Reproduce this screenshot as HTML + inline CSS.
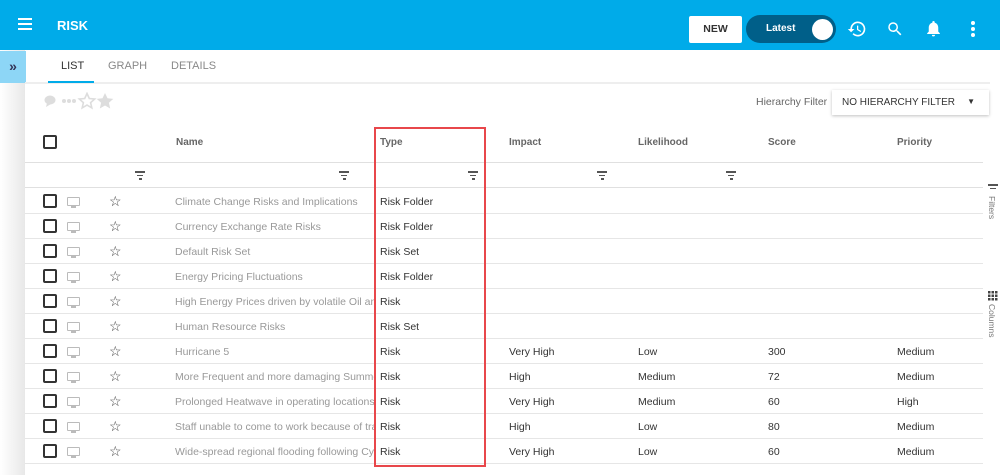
<!DOCTYPE html>
<html><head><style>
*{box-sizing:border-box;margin:0;padding:0}
body{width:1000px;height:475px;overflow:hidden;font-family:"Liberation Sans",sans-serif;background:#fff;position:relative}
.top{position:absolute;left:0;top:0;width:1000px;height:50px;background:#00abe9}
.abs{position:absolute}
.hdr{font-size:10px;font-weight:bold;color:#666}
.row{position:absolute;left:25px;width:958px;height:25px;border-bottom:1px solid #e6e6e6}
.cb{position:absolute;left:18px;top:5px;width:14px;height:14px;border:2px solid #333;border-radius:2px}
.mon{position:absolute;left:42px;top:8px;width:13px;height:9px;border:1.5px solid #bbb;border-radius:1px}
.mon:after{content:"";position:absolute;left:3px;top:8px;width:5px;height:2px;background:#bbb}
.st{position:absolute;left:84px;top:4px;font-size:14px;color:#444}
.c{position:absolute;top:7px;font-size:10.5px;color:#333}
.nm{left:150px;color:#999;width:199px;white-space:nowrap;overflow:hidden}
.flt{position:absolute;top:171px;width:10px}
.flt i{display:block;height:1.5px;background:#555;margin:0 auto 2px}
</style></head><body>
<div class="top"></div>
<div class="abs" style="left:18px;top:18px;width:14px"><div style="height:2px;background:#fff;margin-bottom:3px"></div><div style="height:2px;background:#fff;margin-bottom:3px"></div><div style="height:2px;background:#fff"></div></div>
<div class="abs" style="left:57px;top:18px;color:#fff;font-weight:bold;font-size:13px">RISK</div>
<div class="abs" style="left:689px;top:16px;width:53px;height:27px;background:#fff;border-radius:2px;font-size:10.5px;font-weight:bold;color:#333;text-align:center;line-height:27px">NEW</div>
<div class="abs" style="left:746px;top:15px;width:90px;height:28px;background:#005f89;border-radius:14px"></div>
<div class="abs" style="left:766px;top:23px;color:#fff;font-size:10px;font-weight:bold">Latest</div>
<div class="abs" style="left:812px;top:19px;width:21px;height:21px;background:#fff;border-radius:50%"></div>
<svg class="abs" style="left:847px;top:19px" width="20" height="20" viewBox="0 0 24 24"><path fill="#fff" d="M13 3a9 9 0 0 0-9 9H1l3.9 3.9L9 12H6a7 7 0 1 1 2.05 4.95l-1.420 1.42A9 9 0 1 0 13 3zm-1 5v5l4.28 2.54.72-1.21-3.5-2.08V8z"/></svg>
<svg class="abs" style="left:886px;top:20px" width="18" height="18" viewBox="0 0 24 24"><path fill="#fff" d="M15.5 14h-.79l-.28-.27A6.47 6.47 0 0 0 16 9.5 6.5 6.5 0 1 0 9.5 16c1.61 0 3.09-.59 4.230-1.57l.27.28v.79l5 4.99L20.49 19zm-6 0C7.01 14 5 11.99 5 9.5S7.01 5 9.5 5 14 7.01 14 9.5 11.99 14 9.5 14z"/></svg>
<svg class="abs" style="left:924px;top:19px" width="19" height="19" viewBox="0 0 24 24"><path fill="#fff" d="M12 22c1.1 0 2-.9 2-2h-4a2 2 0 0 0 2 2zm6-6v-5c0-3.07-1.64-5.64-4.5-6.32V4a1.5 1.5 0 0 0-3 0v.68C7.63 5.36 6 7.92 6 11v5l-2 2v1h16v-1z"/></svg>
<svg class="abs" style="left:970px;top:20px" width="6" height="18"><circle cx="3" cy="3" r="2" fill="#fff"/><circle cx="3" cy="9" r="2" fill="#fff"/><circle cx="3" cy="15" r="2" fill="#fff"/></svg>
<div class="abs" style="left:0;top:50px;width:25px;height:425px;background:linear-gradient(90deg,#fff,#e8e8e8)"></div>
<div class="abs" style="left:0;top:51px;width:26px;height:32px;background:#8dd6f6;color:#335;font-size:14px;font-weight:bold;text-align:center;line-height:30px">&#187;</div>
<div class="abs" style="left:25px;top:82px;width:965px;height:2px;background:#eee"></div>
<div class="abs" style="left:61px;top:60px;font-size:11px;color:#333">LIST</div>
<div class="abs" style="left:48px;top:81px;width:46px;height:2px;background:#00abe9"></div>
<div class="abs" style="left:108px;top:60px;font-size:11px;color:#888">GRAPH</div>
<div class="abs" style="left:171px;top:60px;font-size:11px;color:#888">DETAILS</div>
<svg class="abs" style="left:44px;top:92px" width="72" height="18" viewBox="0 0 72 18">
<ellipse cx="6" cy="8" rx="5.5" ry="4.5" fill="#ddd"/><path d="M3 11l-1 4 5-3z" fill="#ddd"/>
<circle cx="20" cy="9" r="2" fill="#ddd"/><circle cx="25" cy="9" r="2" fill="#ddd"/><circle cx="30" cy="9" r="2" fill="#ddd"/>
<path d="M43 1.5l2.3 5 5.4.5-4.1 3.6 1.2 5.3L43 13.1l-4.8 2.8 1.2-5.3-4.1-3.6 5.4-.5z" fill="none" stroke="#ddd" stroke-width="1.6"/>
<path d="M61 1l2.5 5.3 5.8.6-4.4 3.9 1.3 5.7L61 13.5l-5.2 3 1.3-5.7-4.4-3.9 5.8-.6z" fill="#ddd"/></svg>
<div class="abs" style="left:756px;top:96px;font-size:10.5px;color:#666">Hierarchy Filter</div>
<div class="abs" style="left:832px;top:90px;width:157px;height:25px;background:#fff;box-shadow:0 1px 3px rgba(0,0,0,.25);font-size:10px;color:#333;padding:7px 10px">NO HIERARCHY FILTER<span style="position:absolute;right:14px;top:7px;font-size:8px">&#9660;</span></div>
<div class="abs" style="left:43px;top:135px;width:14px;height:14px;border:2px solid #333;border-radius:2px"></div>
<div class="abs hdr" style="left:176px;top:137px">Name</div>
<div class="abs hdr" style="left:380px;top:137px">Type</div>
<div class="abs hdr" style="left:509px;top:137px">Impact</div>
<div class="abs hdr" style="left:638px;top:137px">Likelihood</div>
<div class="abs hdr" style="left:768px;top:137px">Score</div>
<div class="abs hdr" style="left:897px;top:137px">Priority</div>
<div class="abs" style="left:25px;top:162px;width:958px;height:1px;background:#e0e0e0"></div>
<div class="abs" style="left:25px;top:187px;width:958px;height:1px;background:#e0e0e0"></div>
<div class="flt" style="left:135px"><i style="width:10px"></i><i style="width:6px"></i><i style="width:3px"></i></div>
<div class="flt" style="left:339px"><i style="width:10px"></i><i style="width:6px"></i><i style="width:3px"></i></div>
<div class="flt" style="left:468px"><i style="width:10px"></i><i style="width:6px"></i><i style="width:3px"></i></div>
<div class="flt" style="left:597px"><i style="width:10px"></i><i style="width:6px"></i><i style="width:3px"></i></div>
<div class="flt" style="left:726px"><i style="width:10px"></i><i style="width:6px"></i><i style="width:3px"></i></div>

<div class="row" style="top:189px"><div class="cb"></div><div class="mon"></div><div class="st">&#9734;</div><div class="c nm">Climate Change Risks and Implications</div><div class="c" style="left:355px">Risk Folder</div></div>
<div class="row" style="top:214px"><div class="cb"></div><div class="mon"></div><div class="st">&#9734;</div><div class="c nm">Currency Exchange Rate Risks</div><div class="c" style="left:355px">Risk Folder</div></div>
<div class="row" style="top:239px"><div class="cb"></div><div class="mon"></div><div class="st">&#9734;</div><div class="c nm">Default Risk Set</div><div class="c" style="left:355px">Risk Set</div></div>
<div class="row" style="top:264px"><div class="cb"></div><div class="mon"></div><div class="st">&#9734;</div><div class="c nm">Energy Pricing Fluctuations</div><div class="c" style="left:355px">Risk Folder</div></div>
<div class="row" style="top:289px"><div class="cb"></div><div class="mon"></div><div class="st">&#9734;</div><div class="c nm">High Energy Prices driven by volatile Oil and Gas</div><div class="c" style="left:355px">Risk</div></div>
<div class="row" style="top:314px"><div class="cb"></div><div class="mon"></div><div class="st">&#9734;</div><div class="c nm">Human Resource Risks</div><div class="c" style="left:355px">Risk Set</div></div>
<div class="row" style="top:339px"><div class="cb"></div><div class="mon"></div><div class="st">&#9734;</div><div class="c nm">Hurricane 5</div><div class="c" style="left:355px">Risk</div><div class="c" style="left:484px">Very High</div><div class="c" style="left:613px">Low</div><div class="c" style="left:743px">300</div><div class="c" style="left:872px">Medium</div></div>
<div class="row" style="top:364px"><div class="cb"></div><div class="mon"></div><div class="st">&#9734;</div><div class="c nm">More Frequent and more damaging Summer storms</div><div class="c" style="left:355px">Risk</div><div class="c" style="left:484px">High</div><div class="c" style="left:613px">Medium</div><div class="c" style="left:743px">72</div><div class="c" style="left:872px">Medium</div></div>
<div class="row" style="top:389px"><div class="cb"></div><div class="mon"></div><div class="st">&#9734;</div><div class="c nm">Prolonged Heatwave in operating locations</div><div class="c" style="left:355px">Risk</div><div class="c" style="left:484px">Very High</div><div class="c" style="left:613px">Medium</div><div class="c" style="left:743px">60</div><div class="c" style="left:872px">High</div></div>
<div class="row" style="top:414px"><div class="cb"></div><div class="mon"></div><div class="st">&#9734;</div><div class="c nm">Staff unable to come to work because of travel</div><div class="c" style="left:355px">Risk</div><div class="c" style="left:484px">High</div><div class="c" style="left:613px">Low</div><div class="c" style="left:743px">80</div><div class="c" style="left:872px">Medium</div></div>
<div class="row" style="top:439px"><div class="cb"></div><div class="mon"></div><div class="st">&#9734;</div><div class="c nm">Wide-spread regional flooding following Cyclone</div><div class="c" style="left:355px">Risk</div><div class="c" style="left:484px">Very High</div><div class="c" style="left:613px">Low</div><div class="c" style="left:743px">60</div><div class="c" style="left:872px">Medium</div></div>

<div class="abs" style="left:374px;top:127px;width:112px;height:340px;border:2px solid #e8474b"></div>
<div class="abs" style="left:988px;top:184px;width:10px"><div style="height:1.5px;background:#555;margin-bottom:2px"></div><div style="height:1.5px;width:6px;background:#555;margin:0 auto"></div></div>
<div class="abs" style="left:987px;top:196px;font-size:8.5px;color:#777;writing-mode:vertical-rl">Filters</div>
<svg class="abs" style="left:988px;top:291px" width="10" height="10"><g fill="#444"><rect x="0" y="0" width="2.5" height="2.5"/><rect x="3.5" y="0" width="2.5" height="2.5"/><rect x="7" y="0" width="2.5" height="2.5"/><rect x="0" y="3.5" width="2.5" height="2.5"/><rect x="3.5" y="3.5" width="2.5" height="2.5"/><rect x="7" y="3.5" width="2.5" height="2.5"/><rect x="0" y="7" width="2.5" height="2.5"/><rect x="3.5" y="7" width="2.5" height="2.5"/><rect x="7" y="7" width="2.5" height="2.5"/></g></svg>
<div class="abs" style="left:987px;top:304px;font-size:8.5px;color:#777;writing-mode:vertical-rl">Columns</div>
</body></html>
